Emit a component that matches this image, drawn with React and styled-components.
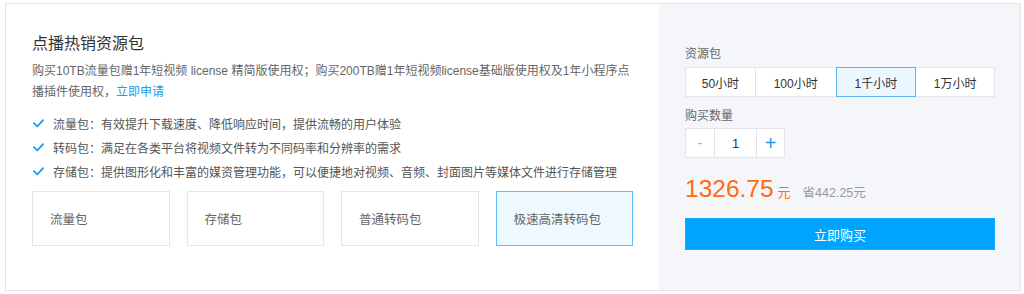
import React, { useState } from "react";
import styled, { createGlobalStyle } from "styled-components";

const GlobalStyle = createGlobalStyle`
  html, body { margin: 0; padding: 0; background: #fff; }
  body {
    font-family: "Liberation Sans", "Noto Sans CJK SC", sans-serif;
    -webkit-font-smoothing: antialiased;
  }
  * { box-sizing: border-box; }
`;

const Page = styled.div`
  padding: 3px 3px 0 5px;
`;

const Card = styled.div`
  display: flex;
  height: 288px;
  border: 1px solid #e6e6e6;
  background: #fff;
`;

const Left = styled.div`
  flex: 1;
  padding: 28px 26px 0 26px;
  min-width: 0;
`;

const Title = styled.h2`
  margin: 0;
  font-size: 16px;
  line-height: 24px;
  font-weight: normal;
  color: #333;
`;

const Desc = styled.p`
  margin: 5px 0 0;
  font-size: 12px;
  line-height: 21px;
  color: #666;
`;

const Link = styled.a`
  color: #1a9cf0;
  text-decoration: none;
  cursor: pointer;
`;

const FeatureList = styled.ul`
  list-style: none;
  margin: 8px 0 0;
  padding: 0;
`;

const Feature = styled.li`
  display: flex;
  align-items: center;
  gap: 9px;
  height: 24px;
  font-size: 12px;
  color: #555;
  padding-left: 1px;
`;

const Check = () => (
  <svg width="11" height="9" viewBox="0 0 11 9" fill="none">
    <path d="M1 4.2 L4.3 7.4 L10.2 1.2" stroke="#1a9cf0" strokeWidth="1.8" strokeLinecap="round" strokeLinejoin="round" />
  </svg>
);

const PackGrid = styled.div`
  display: grid;
  grid-template-columns: repeat(4, 1fr);
  gap: 17px;
  margin-top: 8px;
`;

const Pack = styled.div`
  height: 55px;
  display: flex;
  align-items: center;
  padding-left: 17px;
  font-size: 12.5px;
  color: #666;
  border: 1px solid ${(p) => (p.$active ? "#5cbdf7" : "#e6e6e6")};
  background: ${(p) => (p.$active ? "#eef8ff" : "#fff")};
  cursor: pointer;
`;

const Right = styled.div`
  width: 361px;
  flex: none;
  background: #f5f6f9;
  padding: 41px 25px 0 26px;
`;

const Label = styled.div`
  font-size: 12px;
  line-height: 18px;
  color: #666;
  margin-top: ${(p) => p.$mt || 0}px;
`;

const Segments = styled.div`
  display: flex;
  margin-top: 4px;
`;

const Segment = styled.div`
  position: relative;
  width: ${(p) => p.$w}px;
  height: 30px;
  margin-left: -1px;
  &:first-child { margin-left: 0; }
  display: flex;
  align-items: center;
  justify-content: center;
  font-size: 12px;
  color: #333;
  background: ${(p) => (p.$active ? "#edf7ff" : "#fff")};
  border: 1px solid ${(p) => (p.$active ? "#5ab6f0" : "#e3e5ea")};
  z-index: ${(p) => (p.$active ? 1 : 0)};
  cursor: pointer;
`;

const Stepper = styled.div`
  display: flex;
  margin-top: 3px;
`;

const StepCell = styled.div`
  width: ${(p) => p.$w}px;
  height: 30px;
  margin-left: -1px;
  &:first-child { margin-left: 0; }
  display: flex;
  align-items: center;
  justify-content: center;
  background: #fff;
  border: 1px solid #e3e5ea;
  font-size: ${(p) => p.$fs || 12}px;
  color: ${(p) => p.$color || "#333"};
  cursor: ${(p) => (p.$btn ? "pointer" : "default")};
  user-select: none;
`;

const PriceRow = styled.div`
  display: flex;
  align-items: baseline;
  margin-top: 15px;
  height: 32px;
`;

const Price = styled.span`
  font-family: "Liberation Sans", Arial, sans-serif;
  font-size: 24.5px;
  line-height: 32px;
  color: #ff6a13;
`;

const Unit = styled.span`
  font-size: 13px;
  color: #ff6a13;
  margin-left: 4px;
`;

const Save = styled.span`
  font-size: 12.5px;
  color: #999;
  margin-left: 12px;
`;

const BuyButton = styled.button`
  display: block;
  width: 310px;
  height: 32px;
  margin-top: 13px;
  border: 1px solid #16adff;
  background: #00a4ff;
  color: #fff;
  font-family: inherit;
  font-size: 13px;
  cursor: pointer;
`;

const sizes = [
  { label: "50小时", w: 71 },
  { label: "100小时", w: 82 },
  { label: "1千小时", w: 81 },
  { label: "1万小时", w: 80 },
];

const packs = ["流量包", "存储包", "普通转码包", "极速高清转码包"];

export default function App() {
  const [size, setSize] = useState(2);
  const [pack, setPack] = useState(3);
  const [qty, setQty] = useState(1);
  return (
    <Page>
      <GlobalStyle />
      <Card>
        <Left>
          <Title>点播热销资源包</Title>
          <Desc>
            {"购买10TB流量包赠1年短视频 license 精简版使用权；购买200TB赠1年短视频license基础版使用权及1年小程序点播插件使用权，"}<Link>立即申请</Link>
          </Desc>
          <FeatureList>
            <Feature><Check />流量包：有效提升下载速度、降低响应时间，提供流畅的用户体验</Feature>
            <Feature><Check />转码包：满足在各类平台将视频文件转为不同码率和分辨率的需求</Feature>
            <Feature><Check />存储包：提供图形化和丰富的媒资管理功能，可以便捷地对视频、音频、封面图片等媒体文件进行存储管理</Feature>
          </FeatureList>
          <PackGrid>
            {packs.map((p, i) => (
              <Pack key={p} $active={i === pack} onClick={() => setPack(i)}>{p}</Pack>
            ))}
          </PackGrid>
        </Left>
        <Right>
          <Label>资源包</Label>
          <Segments>
            {sizes.map((s, i) => (
              <Segment key={s.label} $w={s.w} $active={i === size} onClick={() => setSize(i)}>
                {s.label}
              </Segment>
            ))}
          </Segments>
          <Label $mt={10}>购买数量</Label>
          <Stepper>
            <StepCell $w={30} $btn $color="#aaa" $fs={14} onClick={() => setQty(Math.max(1, qty - 1))}>-</StepCell>
            <StepCell $w={43} $fs={13}>{qty}</StepCell>
            <StepCell $w={29} $btn $color="#1a9cf0" $fs={20} onClick={() => setQty(qty + 1)}>+</StepCell>
          </Stepper>
          <PriceRow>
            <Price>1326.75</Price>
            <Unit>元</Unit>
            <Save>省442.25元</Save>
          </PriceRow>
          <BuyButton>立即购买</BuyButton>
        </Right>
      </Card>
    </Page>
  );
}
